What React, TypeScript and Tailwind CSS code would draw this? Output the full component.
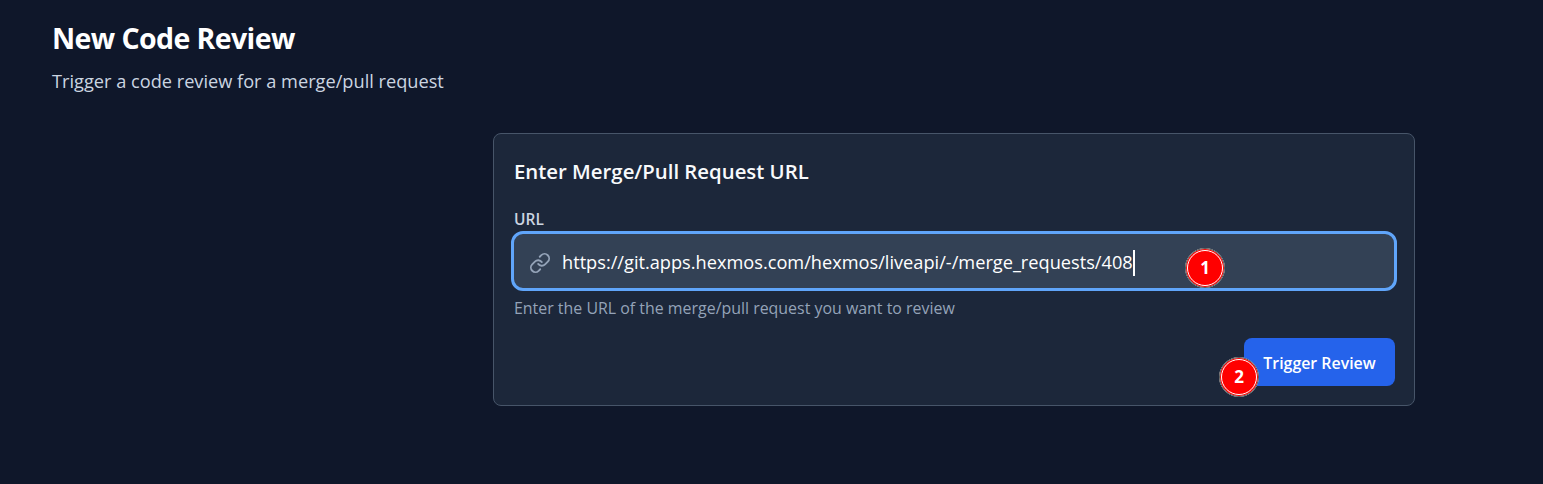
import { Link } from 'lucide-react';

function Badge({ n, className }: { n: number; className: string }) {
  return (
    <div className={`absolute w-10 h-10 rounded-full bg-[#ff0000] border-[3px] border-double border-white outline outline-1 outline-[#555] -outline-offset-1 flex items-center justify-center text-white text-[17px] font-bold ${className}`}>
      {n}
    </div>
  );
}

export default function App() {
  return (
    <div className="w-full h-[484px] overflow-hidden bg-[#0f172a] font-['Open_Sans',sans-serif]">
      <div className="pl-[52px] pt-[19px]">
        <h1 className="text-[28.5px] tracking-[-0.6px] leading-[38px] font-bold text-white">New Code Review</h1>
        <p className="mt-[11px] text-[18.2px] leading-[26px] text-[#cbd5e1]">Trigger a code review for a merge/pull request</p>
      </div>

      <div className="ml-[493px] mt-[39px] w-[922px] h-[273px] bg-[#1c273a] border border-[#475569] rounded-lg pl-[20px] pr-[19px] pt-[23px]">
        <h2 className="text-[20.35px] leading-[28px] font-semibold text-[#f8fafc]">Enter Merge/Pull Request URL</h2>
        <label className="block mt-[24px] text-[15.5px] leading-[20px] font-semibold text-[#cbd5e1]">URL</label>
        <div className="relative mt-[2px]">
          <div className="h-[60px] -ml-[3px] -mr-[2px] flex items-center bg-[#334155] border-[3px] border-[#60a5fa] rounded-xl pl-[15px] pt-[3px]">
            <Link className="w-[22px] h-[22px] text-[#94a3b8]" strokeWidth={2} />
            <span className="ml-[11px] text-[18.2px] text-white whitespace-nowrap">https://git.apps.hexmos.com/hexmos/liveapi/-/merge_requests/408</span>
            <span className="w-[2px] h-[26px] bg-white" />
          </div>
          <Badge n={1} className="left-[671px] top-[17px]" />
        </div>
        <p className="mt-[5px] text-[15.93px] leading-[24px] text-[#94a3b8]">Enter the URL of the merge/pull request you want to review</p>
        <div className="relative flex justify-end mt-[18px]">
          <button className="w-[151px] h-[48px] bg-[#2563eb] rounded-lg text-white text-[15.9px] font-semibold pt-[3px]">Trigger Review</button>
          <Badge n={2} className="left-[705px] top-[19px]" />
        </div>
      </div>
    </div>
  );
}
